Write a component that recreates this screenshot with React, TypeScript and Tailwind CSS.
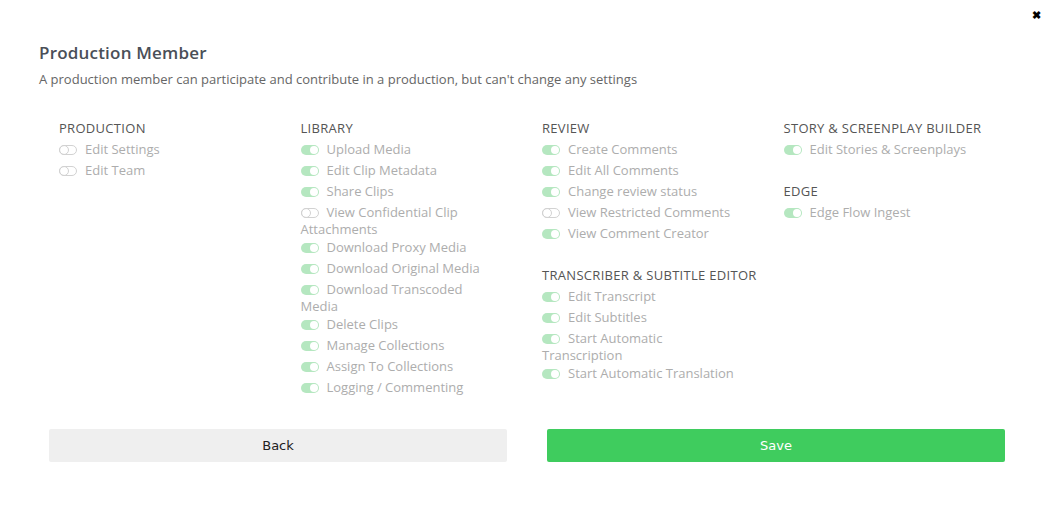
import React from 'react'

type Perm = { label: string; on: boolean }
type Section = { title: string; items: Perm[] }

const columns: Section[][] = [
    [
        {
            title: 'PRODUCTION',
            items: [
                { label: 'Edit Settings', on: false },
                { label: 'Edit Team', on: false },
            ],
        },
    ],
    [
        {
            title: 'LIBRARY',
            items: [
                { label: 'Upload Media', on: true },
                { label: 'Edit Clip Metadata', on: true },
                { label: 'Share Clips', on: true },
                { label: 'View Confidential Clip Attachments', on: false },
                { label: 'Download Proxy Media', on: true },
                { label: 'Download Original Media', on: true },
                { label: 'Download Transcoded Media', on: true },
                { label: 'Delete Clips', on: true },
                { label: 'Manage Collections', on: true },
                { label: 'Assign To Collections', on: true },
                { label: 'Logging / Commenting', on: true },
            ],
        },
    ],
    [
        {
            title: 'REVIEW',
            items: [
                { label: 'Create Comments', on: true },
                { label: 'Edit All Comments', on: true },
                { label: 'Change review status', on: true },
                { label: 'View Restricted Comments', on: false },
                { label: 'View Comment Creator', on: true },
            ],
        },
        {
            title: 'TRANSCRIBER & SUBTITLE EDITOR',
            items: [
                { label: 'Edit Transcript', on: true },
                { label: 'Edit Subtitles', on: true },
                { label: 'Start Automatic Transcription', on: true },
                { label: 'Start Automatic Translation', on: true },
            ],
        },
    ],
    [
        {
            title: 'STORY & SCREENPLAY BUILDER',
            items: [{ label: 'Edit Stories & Screenplays', on: true }],
        },
        {
            title: 'EDGE',
            items: [{ label: 'Edge Flow Ingest', on: true }],
        },
    ],
]

const Toggle = ({ on }: { on: boolean }) => (
    <span className="inline-block align-top h-[14px] mb-[3px] w-[18px] mr-[8px] pt-[3px]">
        {on ? (
            <span className="flex items-center justify-end w-[18px] h-[10px] rounded-full bg-[#b5e7c0] pr-[1px]">
                <span className="w-[8px] h-[8px] rounded-full bg-white" />
            </span>
        ) : (
            <span className="flex items-center w-[18px] h-[10px] rounded-full border border-[#d2d2d2] bg-white">
                <span className="w-[10px] h-[10px] -ml-[1px] rounded-full border border-[#d2d2d2]" />
            </span>
        )}
    </span>
)

const App = () => {
    return (
        <div className="w-[1055px] h-[511px] bg-white relative font-['Open_Sans',sans-serif]">
            <button className="absolute right-[14px] top-[9px] text-[11px] text-black leading-none font-bold">✖</button>

            <div className="pt-[42px] pl-[39px]">
                <h2 className="text-[17px] leading-[22px] font-semibold tracking-[0.2px] text-[#4a4f58]">Production Member</h2>
                <p className="mt-[6px] text-[13px] leading-[18px] text-[#666]">
                    A production member can participate and contribute in a production, but can't change any settings
                </p>
            </div>

            <div className="grid grid-cols-4 w-[966px] ml-[49px] mt-[31px]">
                {columns.map((col, ci) => (
                    <div key={ci} className="pl-[10px]">
                        {col.map((sec, si) => (
                            <div key={si} className={si > 0 ? 'mt-[23px]' : ''}>
                                <div className="text-[13px] leading-[19px] tracking-[0.3px] text-[#555]">{sec.title}</div>
                                {sec.items.map((it) => (
                                    <div key={it.label} className="w-[200px] pt-[4px] text-[13px] leading-[14px] text-[#adadad]">
                                        <Toggle on={it.on} />
                                        {it.label}
                                    </div>
                                ))}
                            </div>
                        ))}
                    </div>
                ))}
            </div>

            <div className="flex gap-[40px] pl-[49px] mt-[32px] font-['DejaVu_Sans',sans-serif]">
                <button className="w-[458px] h-[33px] rounded-[2px] bg-[#efefef] text-[13px] text-[#222]">Back</button>
                <button className="w-[458px] h-[33px] rounded-[2px] bg-[#3fcc5e] text-[13px] text-white">Save</button>
            </div>
        </div>
    )
}

export default App
